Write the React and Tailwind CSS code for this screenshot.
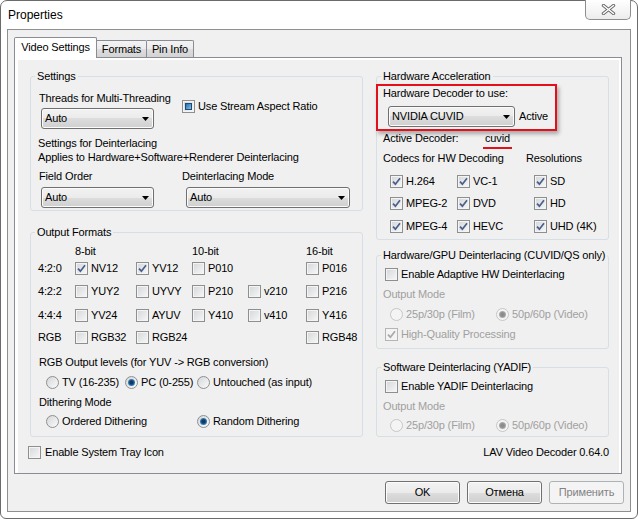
import React from "react";

function Check({ checked, disabled, indeterminate }) {
  return (
    <span
      className={`inline-flex w-[13px] h-[13px] shrink-0 items-center justify-center border ${
        disabled
          ? "border-[#b5b5b5] bg-[#f4f4f4]"
          : "border-[#8e8f8f] bg-[linear-gradient(135deg,#d4d6d9,#f8f8f8)] shadow-[inset_0_0_0_1px_#f4f4f4]"
      }`}
    >
      {checked && (
        <svg width="9" height="9" viewBox="0 0 9 9">
          <path
            d="M1 4.6 L3.4 7.2 L8 1.2"
            fill="none"
            stroke={disabled ? "#a8a8a8" : "#4a5e8c"}
            strokeWidth="1.7"
          />
        </svg>
      )}
      {indeterminate && (
        <span className="w-[7px] h-[7px] border border-[#1d4b78] bg-[linear-gradient(135deg,#2c6ca6,#83c2ec)]" />
      )}
    </span>
  );
}

function Radio({ checked, disabled }) {
  return (
    <span
      className={`inline-flex w-[13px] h-[13px] shrink-0 rounded-full items-center justify-center border ${
        disabled
          ? "border-[#c6c6c6] bg-[#f4f4f4]"
          : "border-[#8e8f8f] bg-[linear-gradient(135deg,#d4d6d9,#fbfbfb)]"
      }`}
    >
      {checked && (
        <span
          className={`w-[7px] h-[7px] rounded-full ${
            disabled
              ? "bg-[radial-gradient(circle,#8c8c8c_35%,#d2d2d2_100%)]"
              : "bg-[radial-gradient(circle,#0f3a62_30%,#3f87c4_70%,#9ccbec_100%)]"
          }`}
        />
      )}
    </span>
  );
}

function CB({ label, checked, disabled, indeterminate, className = "" }) {
  return (
    <div className={`flex items-center gap-[3px] ${className}`}>
      <Check checked={checked} disabled={disabled} indeterminate={indeterminate} />
      <span className={`whitespace-nowrap ${disabled ? "text-[#a0a0a0]" : ""}`}>{label}</span>
    </div>
  );
}

function RB({ label, checked, disabled, className = "" }) {
  return (
    <div className={`flex items-center gap-[3px] ${className}`}>
      <Radio checked={checked} disabled={disabled} />
      <span className={`whitespace-nowrap ${disabled ? "text-[#a0a0a0]" : ""}`}>{label}</span>
    </div>
  );
}

function Combo({ className = "", children }) {
  return (
    <div
      className={`h-[21px] flex items-center justify-between border border-[#707070] rounded-[3px] bg-[linear-gradient(#f2f2f2,#ebebeb_50%,#dddddd_50%,#cfcfcf)] shadow-[inset_0_0_0_1px_#fbfbfb] pl-[3px] pr-[4px] ${className}`}
    >
      <span className="whitespace-nowrap">{children}</span>
      <svg width="7" height="4" viewBox="0 0 7 4">
        <path d="M0 0H7L3.5 4Z" fill="#000" />
      </svg>
    </div>
  );
}

function Btn({ children, disabled }) {
  return (
    <div
      className={`w-[75px] h-[23px] flex items-center justify-center rounded-[3px] border ${
        disabled
          ? "border-[#adb2b5] bg-[#f4f4f4] text-[#838383]"
          : "border-[#707070] bg-[linear-gradient(#f2f2f2,#ebebeb_50%,#dddddd_50%,#cfcfcf)] shadow-[inset_0_0_0_1px_#fcfcfc]"
      }`}
    >
      {children}
    </div>
  );
}

function Group({ title, className = "", children }) {
  return (
    <fieldset className={`border border-[#d5dfe5] rounded-[3px] p-0 m-0 min-w-0 ${className}`}>
      <legend className="ml-[4px] px-[2px] leading-[13px] whitespace-nowrap">{title}</legend>
      {children}
    </fieldset>
  );
}

export default function App() {
  return (
    <div className="w-[638px] h-[519px] bg-white font-['Liberation_Sans',Arial,sans-serif] text-[11px] leading-[13px] tracking-[-0.15px] text-black">
      <div className="w-full h-full border border-[#6b6b6b] rounded-t-[7px] rounded-b-[6px] flex flex-col px-[6px] pb-[6px] bg-white">
        {/* Title bar */}
        <div className="h-[28px] shrink-0 flex justify-between items-start">
          <span className="text-[12px] leading-[14px] tracking-normal mt-[7px] ml-[1px]">Properties</span>
          <div className="-mt-px w-[46px] h-[20px] border border-t-0 border-[#8d8d8d] rounded-b-[5px] bg-[linear-gradient(#ffffff,#ececec)] flex items-center justify-center">
            <svg width="15" height="11" viewBox="0 0 15 11">
              <path d="M2.5 1.5 L12.5 9.5 M12.5 1.5 L2.5 9.5" stroke="#6a6a6a" strokeWidth="3.4" strokeLinecap="round" />
              <path d="M2.5 1.5 L12.5 9.5 M12.5 1.5 L2.5 9.5" stroke="#ffffff" strokeWidth="1.5" strokeLinecap="round" />
            </svg>
          </div>
        </div>

        {/* Client area */}
        <div className="h-[483px] shrink-0 border border-[#8e8f8f] bg-[#f0f0f0] flex flex-col pl-[6px]">
          {/* Tabs */}
          <div className="flex items-end h-[20px] mt-[7px] relative z-10">
            <div className="w-[83px] h-[21px] -mb-px border border-b-0 border-[#898c95] bg-white rounded-t-[2px] text-center pt-[3px]">
              Video Settings
            </div>
            <div className="w-[50px] h-[17px] border border-b-0 border-l-0 border-[#898c95] rounded-tr-[2px] bg-[linear-gradient(#f3f3f3,#ebebeb_50%,#dedede_50%,#d3d3d3)] text-center pt-[2px]">
              Formats
            </div>
            <div className="w-[47px] h-[17px] border border-b-0 border-l-0 border-[#898c95] rounded-tr-[2px] bg-[linear-gradient(#f3f3f3,#ebebeb_50%,#dedede_50%,#d3d3d3)] text-center pt-[2px]">
              Pin Info
            </div>
          </div>

          {/* Tab panel */}
          <div className="w-[608px] h-[417px] border border-[#898c95] bg-white pl-[3px] pt-[2px] pr-[2px]">
            <div className="h-full bg-[#f0f0f0] pl-[12px] pt-[10px] flex flex-col">
              <div className="flex gap-[13px]">
                {/* Left column */}
                <div className="w-[333px] flex flex-col">
                  <Group title="Settings" className="h-[141px]">
                    <div className="flex mt-[9px] ml-[8px]">
                      <div className="w-[143px] flex flex-col">
                        <span>Threads for Multi-Threading</span>
                        <Combo className="w-[113px] ml-[2px] mt-[3px]">Auto</Combo>
                      </div>
                      <CB label="Use Stream Aspect Ratio" indeterminate className="mt-[8px] h-[13px]" />
                    </div>
                    <div className="ml-[7px] mt-[7px] leading-[14px]">
                      <div>Settings for Deinterlacing</div>
                      <div>Applies to Hardware+Software+Renderer Deinterlacing</div>
                    </div>
                    <div className="flex ml-[8px] mt-[6px]">
                      <span className="w-[143px]">Field Order</span>
                      <span>Deinterlacing Mode</span>
                    </div>
                    <div className="flex ml-[10px] mt-[4px]">
                      <Combo className="w-[113px]">Auto</Combo>
                      <Combo className="w-[164px] ml-[32px]">Auto</Combo>
                    </div>
                  </Group>

                  <Group title="Output Formats" className="h-[211px] mt-[15px]">
                    <div className="grid grid-cols-[37px_61px_56px_56px_58px_1fr] grid-rows-[13px_21px_24px_25px_18px] items-center ml-[7px] mt-[6px]">
                      <span />
                      <span>8-bit</span>
                      <span />
                      <span>10-bit</span>
                      <span />
                      <span>16-bit</span>

                      <span>4:2:0</span>
                      <CB label="NV12" checked />
                      <CB label="YV12" checked />
                      <CB label="P010" />
                      <span />
                      <CB label="P016" />

                      <span>4:2:2</span>
                      <CB label="YUY2" />
                      <CB label="UYVY" />
                      <CB label="P210" />
                      <CB label="v210" />
                      <CB label="P216" />

                      <span>4:4:4</span>
                      <CB label="YV24" />
                      <CB label="AYUV" />
                      <CB label="Y410" />
                      <CB label="v410" />
                      <CB label="Y416" />

                      <span>RGB</span>
                      <CB label="RGB32" />
                      <CB label="RGB24" />
                      <span />
                      <span />
                      <CB label="RGB48" />
                    </div>
                    <div className="flex flex-col mt-[6px]">
                      <div className="h-[20px] flex items-center ml-[8px]">
                        RGB Output levels (for YUV -&gt; RGB conversion)
                      </div>
                      <div className="h-[20px] flex items-center ml-[15px]">
                        <RB label="TV (16-235)" className="w-[79px]" />
                        <RB label="PC (0-255)" checked className="w-[72px]" />
                        <RB label="Untouched (as input)" />
                      </div>
                      <div className="h-[20px] flex items-center ml-[8px]">Dithering Mode</div>
                      <div className="h-[19px] flex items-center ml-[15px]">
                        <RB label="Ordered Dithering" className="w-[151px]" />
                        <RB label="Random Dithering" checked />
                      </div>
                    </div>
                  </Group>
                </div>

                {/* Right column */}
                <div className="w-[233px] flex flex-col">
                  <Group title="Hardware Acceleration" className="h-[170px]">
                    <div className="relative">
                      <div className="absolute -left-px top-px w-[181px] h-[47px] border-2 border-[#e3101c] shadow-[2px_3px_4px_rgba(0,0,0,0.3)]" />
                      <div className="pt-[4px] ml-[6px]">Hardware Decoder to use:</div>
                      <div className="flex items-center mt-[6px] ml-[11px]">
                        <Combo className="w-[127px]">NVIDIA CUVID</Combo>
                        <span className="ml-[4px]">Active</span>
                      </div>
                    </div>
                    <div className="flex items-start mt-[5px] ml-[6px]">
                      <span className="w-[100px]">Active Decoder:</span>
                      <span className="px-[2px] pb-[2px] border-b-2 border-[#e3101c]">cuvid</span>
                    </div>
                    <div className="flex mt-[3px] ml-[6px]">
                      <span className="w-[143px]">Codecs for HW Decoding</span>
                      <span>Resolutions</span>
                    </div>
                    <div className="grid grid-cols-[67px_77px_1fr] grid-rows-[22px_23px_22px] items-center ml-[13px] mt-[5px]">
                      <CB label="H.264" checked />
                      <CB label="VC-1" checked />
                      <CB label="SD" checked />
                      <CB label="MPEG-2" checked />
                      <CB label="DVD" checked />
                      <CB label="HD" checked />
                      <CB label="MPEG-4" checked />
                      <CB label="HEVC" checked />
                      <CB label="UHD (4K)" checked />
                    </div>
                  </Group>

                  <Group title="Hardware/GPU Deinterlacing (CUVID/QS only)" className="h-[100px] mt-[9px]">
                    <div className="flex flex-col pt-[2px]">
                      <CB label="Enable Adaptive HW Deinterlacing" className="h-[20px] ml-[8px]" />
                      <div className="h-[20px] flex items-center ml-[6px] text-[#a0a0a0]">Output Mode</div>
                      <div className="h-[20px] flex items-center ml-[13px]">
                        <RB label="25p/30p (Film)" disabled className="w-[106px]" />
                        <RB label="50p/60p (Video)" disabled checked />
                      </div>
                      <CB label="High-Quality Processing" checked disabled className="h-[20px] ml-[8px]" />
                    </div>
                  </Group>

                  <Group title="Software Deinterlacing (YADIF)" className="h-[76px] mt-[12px]">
                    <div className="flex flex-col pt-[2px]">
                      <CB label="Enable YADIF Deinterlacing" className="h-[20px] ml-[8px]" />
                      <div className="h-[20px] flex items-center ml-[6px] text-[#a0a0a0]">Output Mode</div>
                      <div className="h-[18px] flex items-center ml-[13px]">
                        <RB label="25p/30p (Film)" disabled className="w-[106px]" />
                        <RB label="50p/60p (Video)" disabled checked />
                      </div>
                    </div>
                  </Group>
                </div>
              </div>

              {/* Bottom row inside panel */}
              <div className="flex items-center justify-between w-[581px] -ml-[2px] h-[14px] mt-[8px]">
                <CB label="Enable System Tray Icon" className="gap-[4px]" />
                <span>LAV Video Decoder 0.64.0</span>
              </div>
            </div>
          </div>

          {/* Dialog buttons */}
          <div className="flex justify-end gap-[7px] mr-[6px] mt-[7px]">
            <Btn>OK</Btn>
            <Btn>Отмена</Btn>
            <Btn disabled>Применить</Btn>
          </div>
        </div>
      </div>
    </div>
  );
}
